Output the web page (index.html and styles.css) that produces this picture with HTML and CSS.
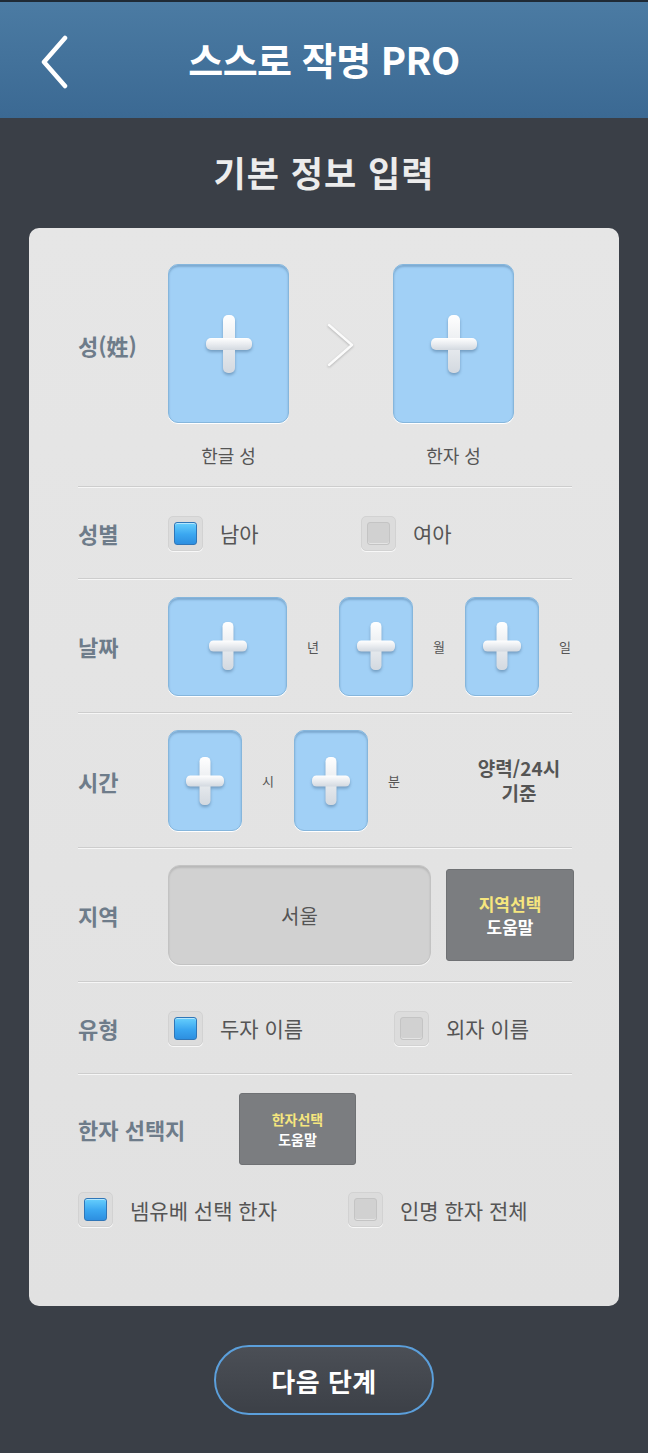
FILE: index.html
```html
<!DOCTYPE html>
<html lang="ko">
<head>
<meta charset="utf-8">
<title>스스로 작명 PRO</title>
<link rel="stylesheet" href="styles.css">
</head>
<body>
<svg width="0" height="0" class="defs" aria-hidden="true">
  <defs>
    <linearGradient id="crossGrad" x1="0" y1="0" x2="0" y2="1">
      <stop offset="0" stop-color="#ffffff"/>
      <stop offset="1" stop-color="#d3d9e0"/>
    </linearGradient>
  </defs>
</svg>

<header class="topbar">
  <svg class="back" width="30" height="54" viewBox="0 0 30 54">
    <polyline points="25,3 4,27 25,51" fill="none" stroke="#ffffff" stroke-width="4.5" stroke-linecap="round" stroke-linejoin="round"/>
  </svg>
  <h1 class="app-title">스스로 작명 PRO</h1>
</header>

<div class="page-title">기본 정보 입력</div>

<main class="card">
  <!-- 성 -->
  <section class="row row-surname">
    <div class="label">성(姓)</div>
    <div class="surname-grid">
      <div class="slot slot-lg">
        <svg class="plus" width="46" height="58" viewBox="0 0 46 58"><rect x="17" y="0" width="12" height="58" rx="5" fill="url(#crossGrad)"/><rect x="0" y="23" width="46" height="12" rx="5" fill="url(#crossGrad)"/></svg>
      </div>
      <div class="arrow">
        <svg class="chev" width="30" height="46" viewBox="0 0 30 46"><polyline points="3,3 26,23 3,43" fill="none" stroke="#fbfbfb" stroke-width="2.4" stroke-linecap="round" stroke-linejoin="round"/></svg>
      </div>
      <div class="slot slot-lg">
        <svg class="plus" width="46" height="58" viewBox="0 0 46 58"><rect x="17" y="0" width="12" height="58" rx="5" fill="url(#crossGrad)"/><rect x="0" y="23" width="46" height="12" rx="5" fill="url(#crossGrad)"/></svg>
      </div>
      <div class="caption">한글 성</div>
      <div></div>
      <div class="caption">한자 성</div>
    </div>
  </section>
  <div class="divider"></div>

  <!-- 성별 -->
  <section class="row row-check">
    <div class="label">성별</div>
    <div class="option opt-gender">
      <span class="check on"><span class="inner"></span></span>
      <span class="opt-text">남아</span>
    </div>
    <div class="option">
      <span class="check"><span class="inner"></span></span>
      <span class="opt-text">여아</span>
    </div>
  </section>
  <div class="divider"></div>

  <!-- 날짜 -->
  <section class="row row-date">
    <div class="label">날짜</div>
    <div class="slot slot-year">
      <svg class="plus" width="38" height="48" viewBox="0 0 38 48"><rect x="13.5" y="0" width="11" height="48" rx="4.5" fill="url(#crossGrad)"/><rect x="0" y="18.5" width="38" height="11" rx="4.5" fill="url(#crossGrad)"/></svg>
    </div>
    <span class="unit">년</span>
    <div class="slot slot-sm">
      <svg class="plus" width="38" height="48" viewBox="0 0 38 48"><rect x="13.5" y="0" width="11" height="48" rx="4.5" fill="url(#crossGrad)"/><rect x="0" y="18.5" width="38" height="11" rx="4.5" fill="url(#crossGrad)"/></svg>
    </div>
    <span class="unit">월</span>
    <div class="slot slot-sm">
      <svg class="plus" width="38" height="48" viewBox="0 0 38 48"><rect x="13.5" y="0" width="11" height="48" rx="4.5" fill="url(#crossGrad)"/><rect x="0" y="18.5" width="38" height="11" rx="4.5" fill="url(#crossGrad)"/></svg>
    </div>
    <span class="unit">일</span>
  </section>
  <div class="divider"></div>

  <!-- 시간 -->
  <section class="row row-time">
    <div class="label">시간</div>
    <div class="slot slot-sm slot-time">
      <svg class="plus" width="38" height="48" viewBox="0 0 38 48"><rect x="13.5" y="0" width="11" height="48" rx="4.5" fill="url(#crossGrad)"/><rect x="0" y="18.5" width="38" height="11" rx="4.5" fill="url(#crossGrad)"/></svg>
    </div>
    <span class="unit">시</span>
    <div class="slot slot-sm slot-time">
      <svg class="plus" width="38" height="48" viewBox="0 0 38 48"><rect x="13.5" y="0" width="11" height="48" rx="4.5" fill="url(#crossGrad)"/><rect x="0" y="18.5" width="38" height="11" rx="4.5" fill="url(#crossGrad)"/></svg>
    </div>
    <span class="unit">분</span>
    <div class="time-note">
      <span class="note-line">양력/24시</span>
      <span class="note-line">기준</span>
    </div>
  </section>
  <div class="divider"></div>

  <!-- 지역 -->
  <section class="row row-region">
    <div class="label">지역</div>
    <div class="region-field">서울</div>
    <div class="help-btn help-region">
      <span class="help-top">지역선택</span>
      <span class="help-bottom">도움말</span>
    </div>
  </section>
  <div class="divider"></div>

  <!-- 유형 -->
  <section class="row row-check">
    <div class="label">유형</div>
    <div class="option opt-type">
      <span class="check on"><span class="inner"></span></span>
      <span class="opt-text">두자 이름</span>
    </div>
    <div class="option">
      <span class="check"><span class="inner"></span></span>
      <span class="opt-text">외자 이름</span>
    </div>
  </section>
  <div class="divider"></div>

  <!-- 한자 선택지 -->
  <section class="hanja">
    <div class="hanja-head">
      <div class="label label-wide">한자 선택지</div>
      <div class="help-btn help-hanja">
        <span class="help-top">한자선택</span>
        <span class="help-bottom">도움말</span>
      </div>
    </div>
    <div class="hanja-opts">
      <div class="option opt-hanja">
        <span class="check on"><span class="inner"></span></span>
        <span class="opt-text">넴유베 선택 한자</span>
      </div>
      <div class="option">
        <span class="check"><span class="inner"></span></span>
        <span class="opt-text">인명 한자 전체</span>
      </div>
    </div>
  </section>
</main>

<div class="footer">
  <button class="next-btn" type="button">다음 단계</button>
</div>
</body>
</html>
```

FILE: styles.css
```css
* { box-sizing: border-box; }

html, body {
  margin: 0;
  padding: 0;
}

body {
  width: 648px;
  min-height: 1453px;
  background: #3a3f47;
  font-family: "Noto Sans CJK KR", "Noto Sans", sans-serif;
  color: #555;
}

.defs {
  position: absolute;
  width: 0;
  height: 0;
}

/* Header */
.topbar {
  height: 118px;
  border-top: 2px solid #1f2a35;
  background: linear-gradient(#4b7ba3, #3b6993);
  display: flex;
  align-items: center;
  justify-content: center;
  position: relative;
}

.back {
  position: absolute;
  left: 40px;
  top: 33px;
}

.app-title {
  margin: 0;
  color: #ffffff;
  font-size: 38px;
  font-weight: 700;
  letter-spacing: -0.5px;
  line-height: 1;
  padding-bottom: 2px;
}

.page-title {
  height: 110px;
  display: flex;
  align-items: center;
  justify-content: center;
  color: #ececec;
  font-size: 35px;
  font-weight: 700;
  letter-spacing: 1px;
  padding-bottom: 4px;
}

/* Card */
.card {
  margin: 0 29px;
  width: 590px;
  background: linear-gradient(#e6e6e6, #e1e1e1);
  border-radius: 10px;
  padding: 0 47px 79px 49px;
}

.divider {
  height: 2px;
  border-top: 1px solid #cdcdcd;
  border-bottom: 1px solid #f6f6f6;
  background: #dedede;
}

.row {
  display: flex;
  align-items: center;
}

.label {
  width: 90px;
  flex-shrink: 0;
  font-size: 22px;
  font-weight: 700;
  color: #6e7c8a;
}

/* Slots (plus boxes) */
.slot {
  flex-shrink: 0;
  background: #a1d0f6;
  border: 1px solid #86b6dc;
  border-radius: 10px;
  box-shadow: inset 0 2px 2px rgba(60, 100, 140, 0.35), 0 1px 0 #ffffff;
  display: flex;
  align-items: center;
  justify-content: center;
}

.plus {
  filter: drop-shadow(0 2px 1.5px rgba(60, 95, 130, 0.45));
}

.slot-lg { width: 121px; height: 159px; }
.slot-year { width: 119px; height: 99px; }
.slot-sm { width: 74px; height: 99px; }
.slot-time { height: 101px; }

/* Row 1 */
.row-surname {
  padding: 36px 0 19px;
  align-items: flex-start;
}

.row-surname .label {
  align-self: flex-start;
  margin-top: 65px;
}

.surname-grid {
  display: grid;
  grid-template-columns: 121px 104px 121px;
  row-gap: 20px;
}

.arrow {
  display: flex;
  align-items: center;
  justify-content: center;
  padding-top: 2px;
}

.chev {
  filter: drop-shadow(0 1px 1px rgba(0, 0, 0, 0.22));
}

.caption {
  text-align: center;
  font-size: 18px;
  line-height: 24px;
  color: #555;
}

/* Check options */
.row-check { height: 90px; }

.option {
  display: flex;
  align-items: center;
  flex-shrink: 0;
}

.opt-gender { width: 193px; }
.opt-type { width: 226px; }
.opt-hanja { width: 270px; }

.check {
  width: 35px;
  height: 35px;
  flex-shrink: 0;
  border-radius: 5px;
  background: #dcdcdc;
  border: 1px solid #d2d2d2;
  box-shadow: 0 1px 0 #f8f8f8;
  display: flex;
  align-items: center;
  justify-content: center;
  margin-right: 17px;
}

.check .inner {
  width: 23px;
  height: 23px;
  border-radius: 3px;
  background: #d1d1d1;
  border: 1px solid #c4c4c4;
  box-shadow: inset 0 -1px 0 #e4e4e4;
}

.check.on .inner {
  background: linear-gradient(#66cffd, #3aa6f0 55%, #2d8fe0);
  border: 1px solid #2f76b8;
  box-shadow: inset 0 1px 0 rgba(255, 255, 255, 0.5);
}

.opt-text {
  font-size: 21px;
  color: #555;
}

/* Date / time */
.row-date { height: 132px; }
.row-time { height: 133px; }

.unit {
  width: 52px;
  flex-shrink: 0;
  text-align: center;
  font-size: 13px;
  color: #555;
}

.time-note {
  width: 120px;
  margin-left: 39px;
  flex-shrink: 0;
  display: flex;
  flex-direction: column;
  align-items: center;
  font-size: 19px;
  font-weight: 700;
  color: #555;
  margin-top: -2px;
}

.note-line {
  display: block;
  line-height: 25px;
}

/* Region */
.row-region { height: 132px; }

.region-field {
  width: 263px;
  height: 100px;
  flex-shrink: 0;
  border-radius: 12px;
  background: #d1d1d1;
  border: 1px solid #c3c3c3;
  box-shadow: inset 0 2px 2px rgba(0, 0, 0, 0.12), 0 1px 0 #f6f6f6;
  display: flex;
  align-items: center;
  justify-content: center;
  font-size: 20px;
  color: #555;
  margin-right: 15px;
}

.help-btn {
  flex-shrink: 0;
  background: #7b7d80;
  border: 1px solid #6f7174;
  border-radius: 3px;
  display: flex;
  flex-direction: column;
  align-items: center;
  justify-content: center;
  font-weight: 700;
}

.help-region {
  width: 128px;
  height: 92px;
  font-size: 17px;
  line-height: 23px;
}

.help-top { color: #f6e67e; }
.help-bottom { color: #ffffff; }

/* Hanja */
.hanja { padding-top: 18px; }

.hanja-head {
  display: flex;
  align-items: center;
}

.label-wide {
  width: 161px;
}

.help-hanja {
  width: 117px;
  height: 72px;
  font-size: 14px;
  line-height: 20px;
}

.hanja-opts {
  display: flex;
  align-items: center;
  margin-top: 27px;
}

/* Footer */
.footer {
  display: flex;
  justify-content: center;
  padding-top: 39px;
}

.next-btn {
  width: 220px;
  height: 70px;
  border-radius: 35px;
  border: 2px solid #5b9fdb;
  background: linear-gradient(#4b4f56, #3c4047);
  color: #ffffff;
  font-family: "Noto Sans CJK KR", "Noto Sans", sans-serif;
  font-size: 26px;
  font-weight: 700;
  letter-spacing: 0.5px;
  padding: 0;
}
```
